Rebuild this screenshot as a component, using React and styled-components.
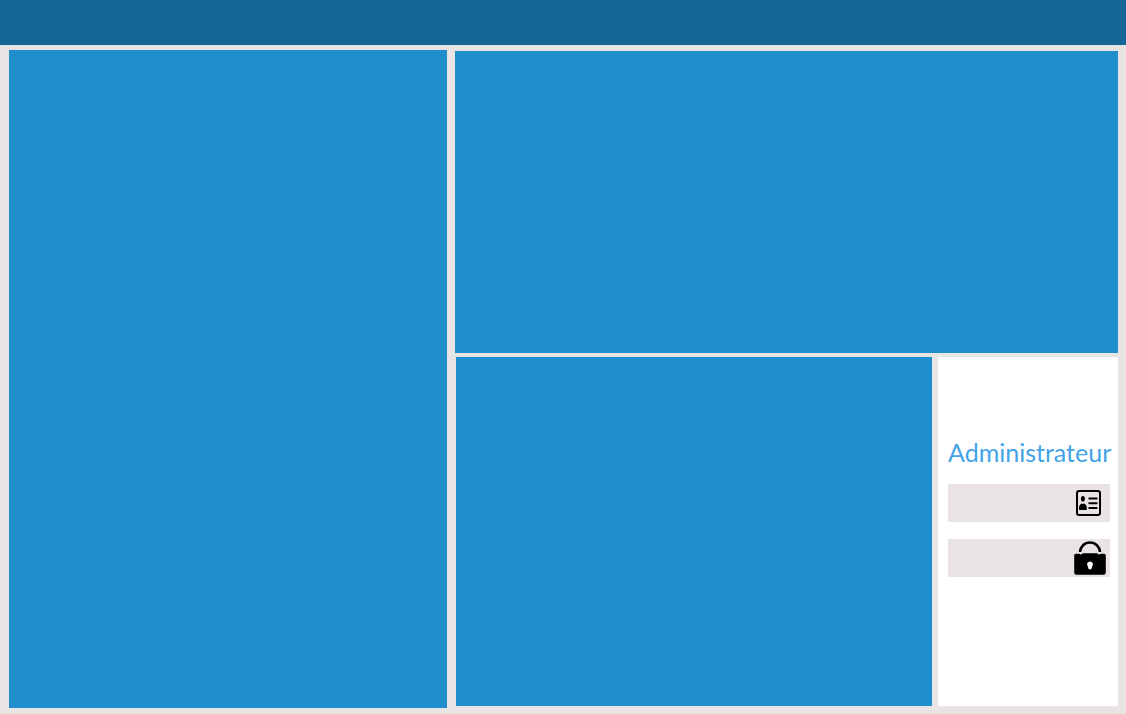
import React from "react";
import styled, { createGlobalStyle } from "styled-components";

const GlobalStyle = createGlobalStyle`
  *, *::before, *::after { box-sizing: border-box; }
  body {
    margin: 0;
    background: #e9e4e4;
    font-family: Lato, "Liberation Sans", sans-serif;
  }
`;

const Page = styled.div`
  min-height: 100vh;
  display: flex;
  flex-direction: column;
`;

const Header = styled.header`
  height: 45px;
  flex: none;
  background: #146696;
`;

const Content = styled.main`
  flex: 1;
  display: grid;
  grid-template-columns: 438fr 663fr;
  gap: 8px;
  padding: 5px 8px 6px 9px;
`;

const Panel = styled.section`
  background: #208dcd;
`;

const RightColumn = styled.div`
  display: grid;
  grid-template-rows: 302fr 349fr;
  gap: 4px;
  padding: 1px 0 2px;
`;

const BottomRow = styled.div`
  display: grid;
  grid-template-columns: 1fr 180px;
  gap: 6px;
  padding-left: 1px;
`;

const LoginPanel = styled.form`
  display: flex;
  flex-direction: column;
  gap: 17px;
  padding: 80px 8px 20px 10px;
  background: #ffffff;
`;

const Title = styled.h1`
  margin: 0;
  font-size: 25px;
  line-height: 30px;
  font-weight: 400;
  text-align: center;
  white-space: nowrap;
  color: #43a3e6;
`;

const Field = styled.label`
  display: flex;
  align-items: center;
  height: 38px;
  padding-right: ${({ $inset }) => $inset};
  background: #e9e3e3;
`;

const Input = styled.input`
  flex: 1;
  min-width: 0;
  height: 100%;
  padding: 0 8px;
  border: 0;
  background: transparent;
  font: inherit;
  color: #000000;
`;

const Icon = styled.svg`
  flex: none;
  display: block;
`;

function IdCardIcon() {
  return (
    <Icon width="25" height="26" viewBox="0 0 25 26" aria-hidden="true">
      <rect x="1" y="1" width="23" height="24" rx="2.2" fill="none" stroke="#000" strokeWidth="2" />
      <ellipse cx="6.900" cy="8.800" rx="2" ry="2.800" />
      <path d="M3 20v-2.200c0-2.200 1.300-3.400 2.600-4.200q1.300.9 2.600 0c1.400.8 2.600 2 2.600 4.200V20z" />
      <path d="M13.300 8.400h7.400M13.300 13.200h7.400M13.300 17.900h7.400" stroke="#000" strokeWidth="2" strokeLinecap="round" />
    </Icon>
  );
}

function LockIcon() {
  return (
    <Icon width="32" height="34" viewBox="0 0 32 34" aria-hidden="true">
      <path d="M6 11C6.400 5.500 10.500 1.500 16 1.500S25.600 5.500 26 11" fill="none" stroke="#000" strokeWidth="2.600" />
      <path d="M2 12.800h3.500c.8 1 2.300.8 3.200-.6h14.600c.9 1.400 2.400 1.600 3.200.6H30q1.800 0 1.800 1.700v17q0 2.300-2.200 2.300H2.400q-2.200 0-2.200-2.300v-17q0-1.700 1.800-1.700z" />
      <path d="M16 20.400a2.900 2.900 0 0 0-2.200 4.800l.6 2.200q1.600 2 3.200 0l.6-2.200A2.900 2.900 0 0 0 16 20.400z" fill="#fff" />
    </Icon>
  );
}

export default function App() {
  return (
    <>
      <GlobalStyle />
      <Page>
        <Header />
        <Content>
          <Panel />
          <RightColumn>
            <Panel />
            <BottomRow>
              <Panel />
              <LoginPanel>
                <Title>Administrateur</Title>
                <Field $inset="9px">
                  <Input type="text" aria-label="Identifiant" />
                  <IdCardIcon />
                </Field>
                <Field $inset="4px">
                  <Input type="password" aria-label="Mot de passe" />
                  <LockIcon />
                </Field>
              </LoginPanel>
            </BottomRow>
          </RightColumn>
        </Content>
      </Page>
    </>
  );
}
